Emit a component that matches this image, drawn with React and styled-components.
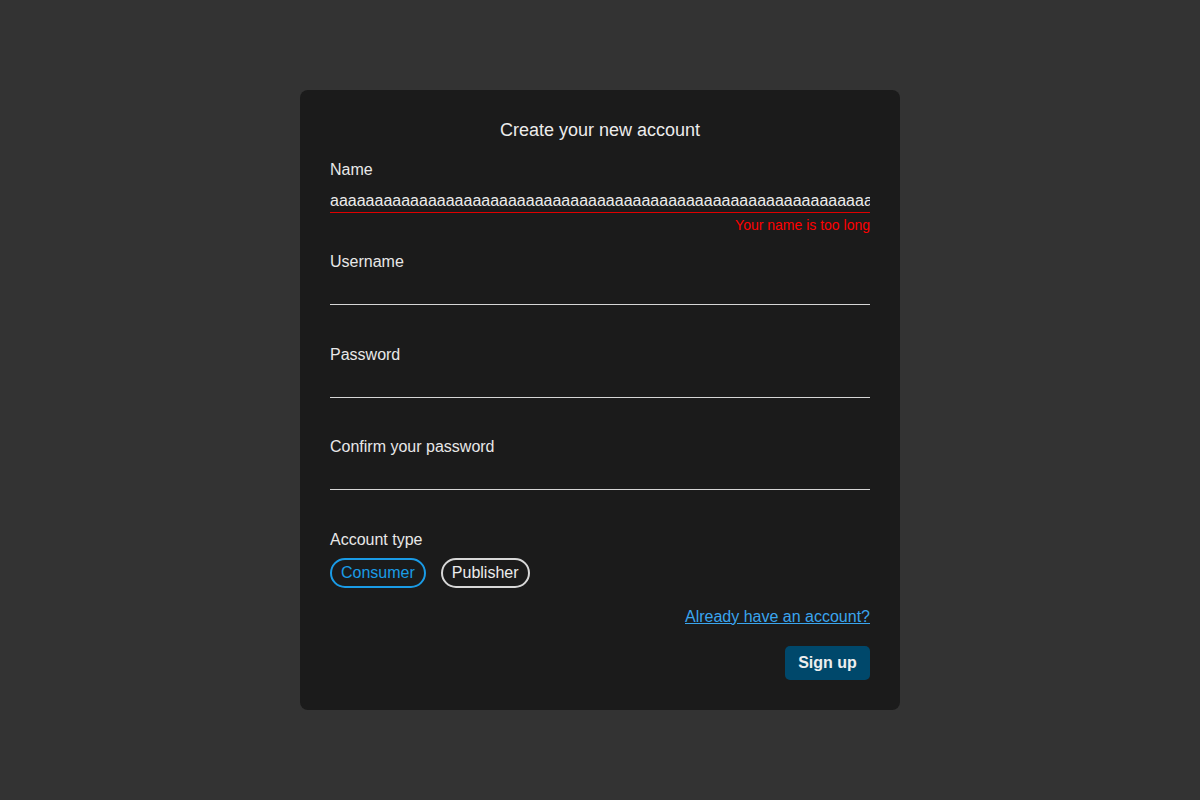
import React from "react";
import styled, { createGlobalStyle } from "styled-components";

const Global = createGlobalStyle`
  html, body { margin: 0; padding: 0; background: #333333; }
  body { font-family: "Liberation Sans", Arial, sans-serif; color: #e8e8e8; }
  * { box-sizing: border-box; }
`;

const Page = styled.div`
  min-height: 800px;
  display: flex;
  justify-content: center;
  align-items: flex-start;
  padding-top: 90px;
`;

const Card = styled.form`
  width: 600px;
  background: #1b1b1b;
  border-radius: 8px;
  padding: 30px;
  display: flex;
  flex-direction: column;
  gap: 19px;
`;

const Title = styled.h1`
  margin: 0 0 1px;
  font-size: 18px;
  font-weight: 400;
  text-align: center;
  color: #ececec;
`;

const Field = styled.div`
  display: flex;
  flex-direction: column;
`;

const Label = styled.label`
  font-size: 16px;
  margin-bottom: 10px;
  color: #e8e8e8;
`;

const Input = styled.input`
  height: 24px;
  padding: 0;
  border: none;
  border-bottom: 1px solid ${(p) => (p.$error ? "#e00000" : "#d6d6d6")};
  background: transparent;
  color: #ececec;
  font-family: "Liberation Sans", Arial, sans-serif;
  font-size: 16px;
  outline: none;
`;

const ErrorText = styled.div`
  margin-top: 5px;
  min-height: 16.4px;
  font-size: 14px;
  line-height: 15px;
  color: #ff0000;
  text-align: right;
`;

const Pills = styled.div`
  display: flex;
  gap: 15px;
`;

const Pill = styled.button`
  height: 30px;
  padding: 0 9px;
  border-radius: 15px;
  background: transparent;
  border: 2px solid ${(p) => (p.$active ? "#1a9be6" : "#d8d8d8")};
  color: ${(p) => (p.$active ? "#1a9be6" : "#ececec")};
  font-family: "Liberation Sans", Arial, sans-serif;
  font-size: 16px;
  cursor: pointer;
`;

const LinkRow = styled.div`
  display: flex;
  justify-content: flex-end;
  margin-top: 1px;
`;

const Link = styled.a`
  font-size: 16px;
  color: #3aa5ee;
  text-decoration: underline;
  cursor: pointer;
`;

const ButtonRow = styled.div`
  display: flex;
  justify-content: flex-end;
  margin-top: 1px;
`;

const Submit = styled.button`
  height: 34px;
  width: 85px;
  border: none;
  border-radius: 5px;
  background: #00486b;
  color: #eeeeee;
  font-family: "Liberation Sans", Arial, sans-serif;
  font-size: 16px;
  font-weight: 700;
  cursor: pointer;
`;

const TypeLabel = styled(Label)`
  margin-bottom: 9px;
`;

const fields = [
  { id: "name", label: "Name", value: "a".repeat(90), error: "Your name is too long" },
  { id: "username", label: "Username", value: "" },
  { id: "password", label: "Password", value: "", type: "password" },
  { id: "confirm", label: "Confirm your password", value: "", type: "password" },
];

export default function App() {
  return (
    <>
      <Global />
      <Page>
        <Card onSubmit={(e) => e.preventDefault()}>
          <Title>Create your new account</Title>
          {fields.map((f) => (
            <Field key={f.id}>
              <Label htmlFor={f.id}>{f.label}</Label>
              <Input
                id={f.id}
                type={f.type || "text"}
                defaultValue={f.value}
                $error={!!f.error}
              />
              <ErrorText>{f.error || ""}</ErrorText>
            </Field>
          ))}
          <Field>
            <TypeLabel>Account type</TypeLabel>
            <Pills>
              <Pill type="button" $active>Consumer</Pill>
              <Pill type="button">Publisher</Pill>
            </Pills>
          </Field>
          <LinkRow>
            <Link>Already have an account?</Link>
          </LinkRow>
          <ButtonRow>
            <Submit type="submit">Sign up</Submit>
          </ButtonRow>
        </Card>
      </Page>
    </>
  );
}
